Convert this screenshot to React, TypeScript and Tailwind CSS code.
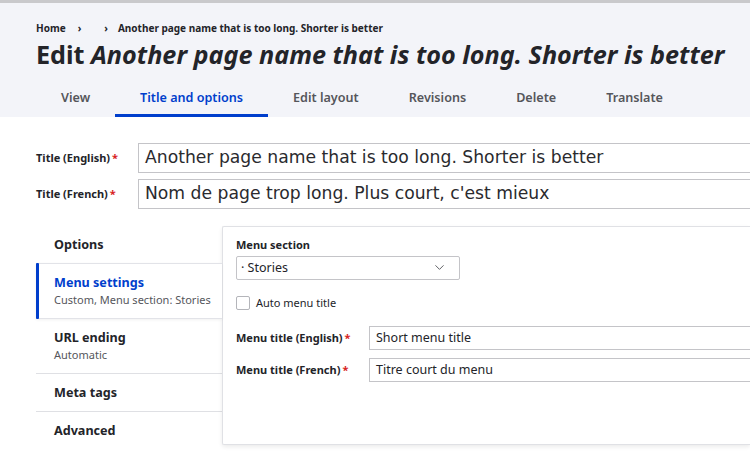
import { ChevronDown } from "lucide-react";

const tabs = ["View", "Title and options", "Edit layout", "Revisions", "Delete", "Translate"];

const Req = () => <span className="text-[#d72222] ml-[2px]">*</span>;

const App = () => {
  return (
    <div className="w-[750px] h-[455px] overflow-hidden bg-white text-[#232429]" style={{ fontFamily: '"Noto Sans", sans-serif' }}>
      {/* header */}
      <div className="border-t-[3px] border-[#c9c9cc] bg-[#f3f4f9] pl-[36px]">
        <div className="flex items-center pt-[17px] text-[10px] font-bold leading-[16px]">
          <span>Home</span>
          <span className="ml-[12px] text-[10px]">›</span>
          <span className="ml-[23px] text-[10px]">›</span>
          <span className="ml-[10px]">Another page name that is too long. Shorter is better</span>
        </div>
        <h1 className="mt-[1px] text-[25.2px] font-bold leading-[34px] whitespace-nowrap">
          Edit <em>Another page name that is too long. Shorter is better</em>
        </h1>
        <div className="mt-[13px] flex text-[12.6px] font-semibold text-[#55565b]">
          {tabs.map((t) => (
            <div
              key={t}
              className={`px-[25px] pt-[5px] pb-[6px] border-b-[3px] ${
                t === "Title and options" ? "border-[#003ecc] text-[#003ecc]" : "border-transparent"
              }`}
            >
              {t}
            </div>
          ))}
        </div>
      </div>

      {/* titles */}
      <div className="pl-[36px] pt-[26px] flex flex-col gap-[6px]">
        {[
          ["Title (English)", "Another page name that is too long. Shorter is better"],
          ["Title (French)", "Nom de page trop long. Plus court, c'est mieux"],
        ].map(([label, value]) => (
          <div key={label} className="flex items-center">
            <label className="w-[102px] text-[11px] font-bold">
              {label}
              <Req />
            </label>
            <div
              className="flex-1 h-[30px] border border-[#c4c4c8] border-r-0 pl-[6px] flex items-center text-[17.2px] text-[#2a2a2e] whitespace-nowrap"
              style={{ fontFamily: '"DejaVu Sans", sans-serif' }}
            >
              {value}
            </div>
          </div>
        ))}
      </div>

      {/* vertical tabs */}
      <div className="flex pl-[36px] mt-[17px]">
        <div className="w-[186px] pt-[10px]">
          <div className="pl-[18px] h-[27px] text-[12.6px] font-bold leading-[18px]">Options</div>
          <div className="relative bg-white border-y border-[#e2e3e8] shadow-[0_1px_3px_rgba(0,0,0,0.06)] pl-[18px] pt-[10px] h-[56px]">
            <div className="absolute left-0 top-[-1px] bottom-[-1px] w-[3px] bg-[#003ecc] rounded-[1px]" />
            <div className="text-[12.6px] font-bold text-[#003ecc] leading-[18px]">Menu settings</div>
            <div className="text-[11px] text-[#55565b] leading-[16px]">Custom, Menu section: Stories</div>
          </div>
          <div className="pl-[18px] pt-[10px] h-[55px] border-b border-[#dfe0e4]">
            <div className="text-[12.6px] font-bold leading-[18px]">URL ending</div>
            <div className="text-[11px] text-[#55565b] leading-[16px]">Automatic</div>
          </div>
          <div className="pl-[18px] pt-[10px] h-[38px] border-b border-[#dfe0e4] text-[12.6px] font-bold leading-[18px]">Meta tags</div>
          <div className="pl-[18px] pt-[10px] h-[38px] text-[12.6px] font-bold leading-[18px]">Advanced</div>
        </div>

        <div className="flex-1 h-[219px] border border-[#e0e1e5] border-r-0 rounded-l-[2px] shadow-[0_2px_4px_rgba(0,0,0,0.08)] pl-[13px] pt-[10px]">
          <div className="text-[11px] font-bold leading-[16px]">Menu section</div>
          <div className="mt-[3px] w-[224px] h-[24px] border border-[#c4c4c8] rounded-[2px] flex items-center justify-between pl-[4px] pr-[12px] text-[12.5px]">
            <span>· Stories</span>
            <ChevronDown size={15} strokeWidth={1.5} className="text-[#55565b]" />
          </div>
          <div className="mt-[15px] flex items-center">
            <div className="w-[14px] h-[14px] border border-[#b4b5ba] rounded-[2px]" />
            <span className="ml-[6px] text-[11px]">Auto menu title</span>
          </div>
          <div className="mt-[15px] flex flex-col gap-[8px]">
            {[
              ["Menu title (English)", "Short menu title"],
              ["Menu title (French)", "Titre court du menu"],
            ].map(([label, value]) => (
              <div key={label} className="flex items-center">
                <label className="w-[133px] text-[11px] font-bold">
                  {label}
                  <Req />
                </label>
                <div className="flex-1 h-[24px] border border-[#c4c4c8] border-r-0 pl-[6px] flex items-center text-[12.5px]">
                  {value}
                </div>
              </div>
            ))}
          </div>
        </div>
      </div>
    </div>
  );
};

export default App;
